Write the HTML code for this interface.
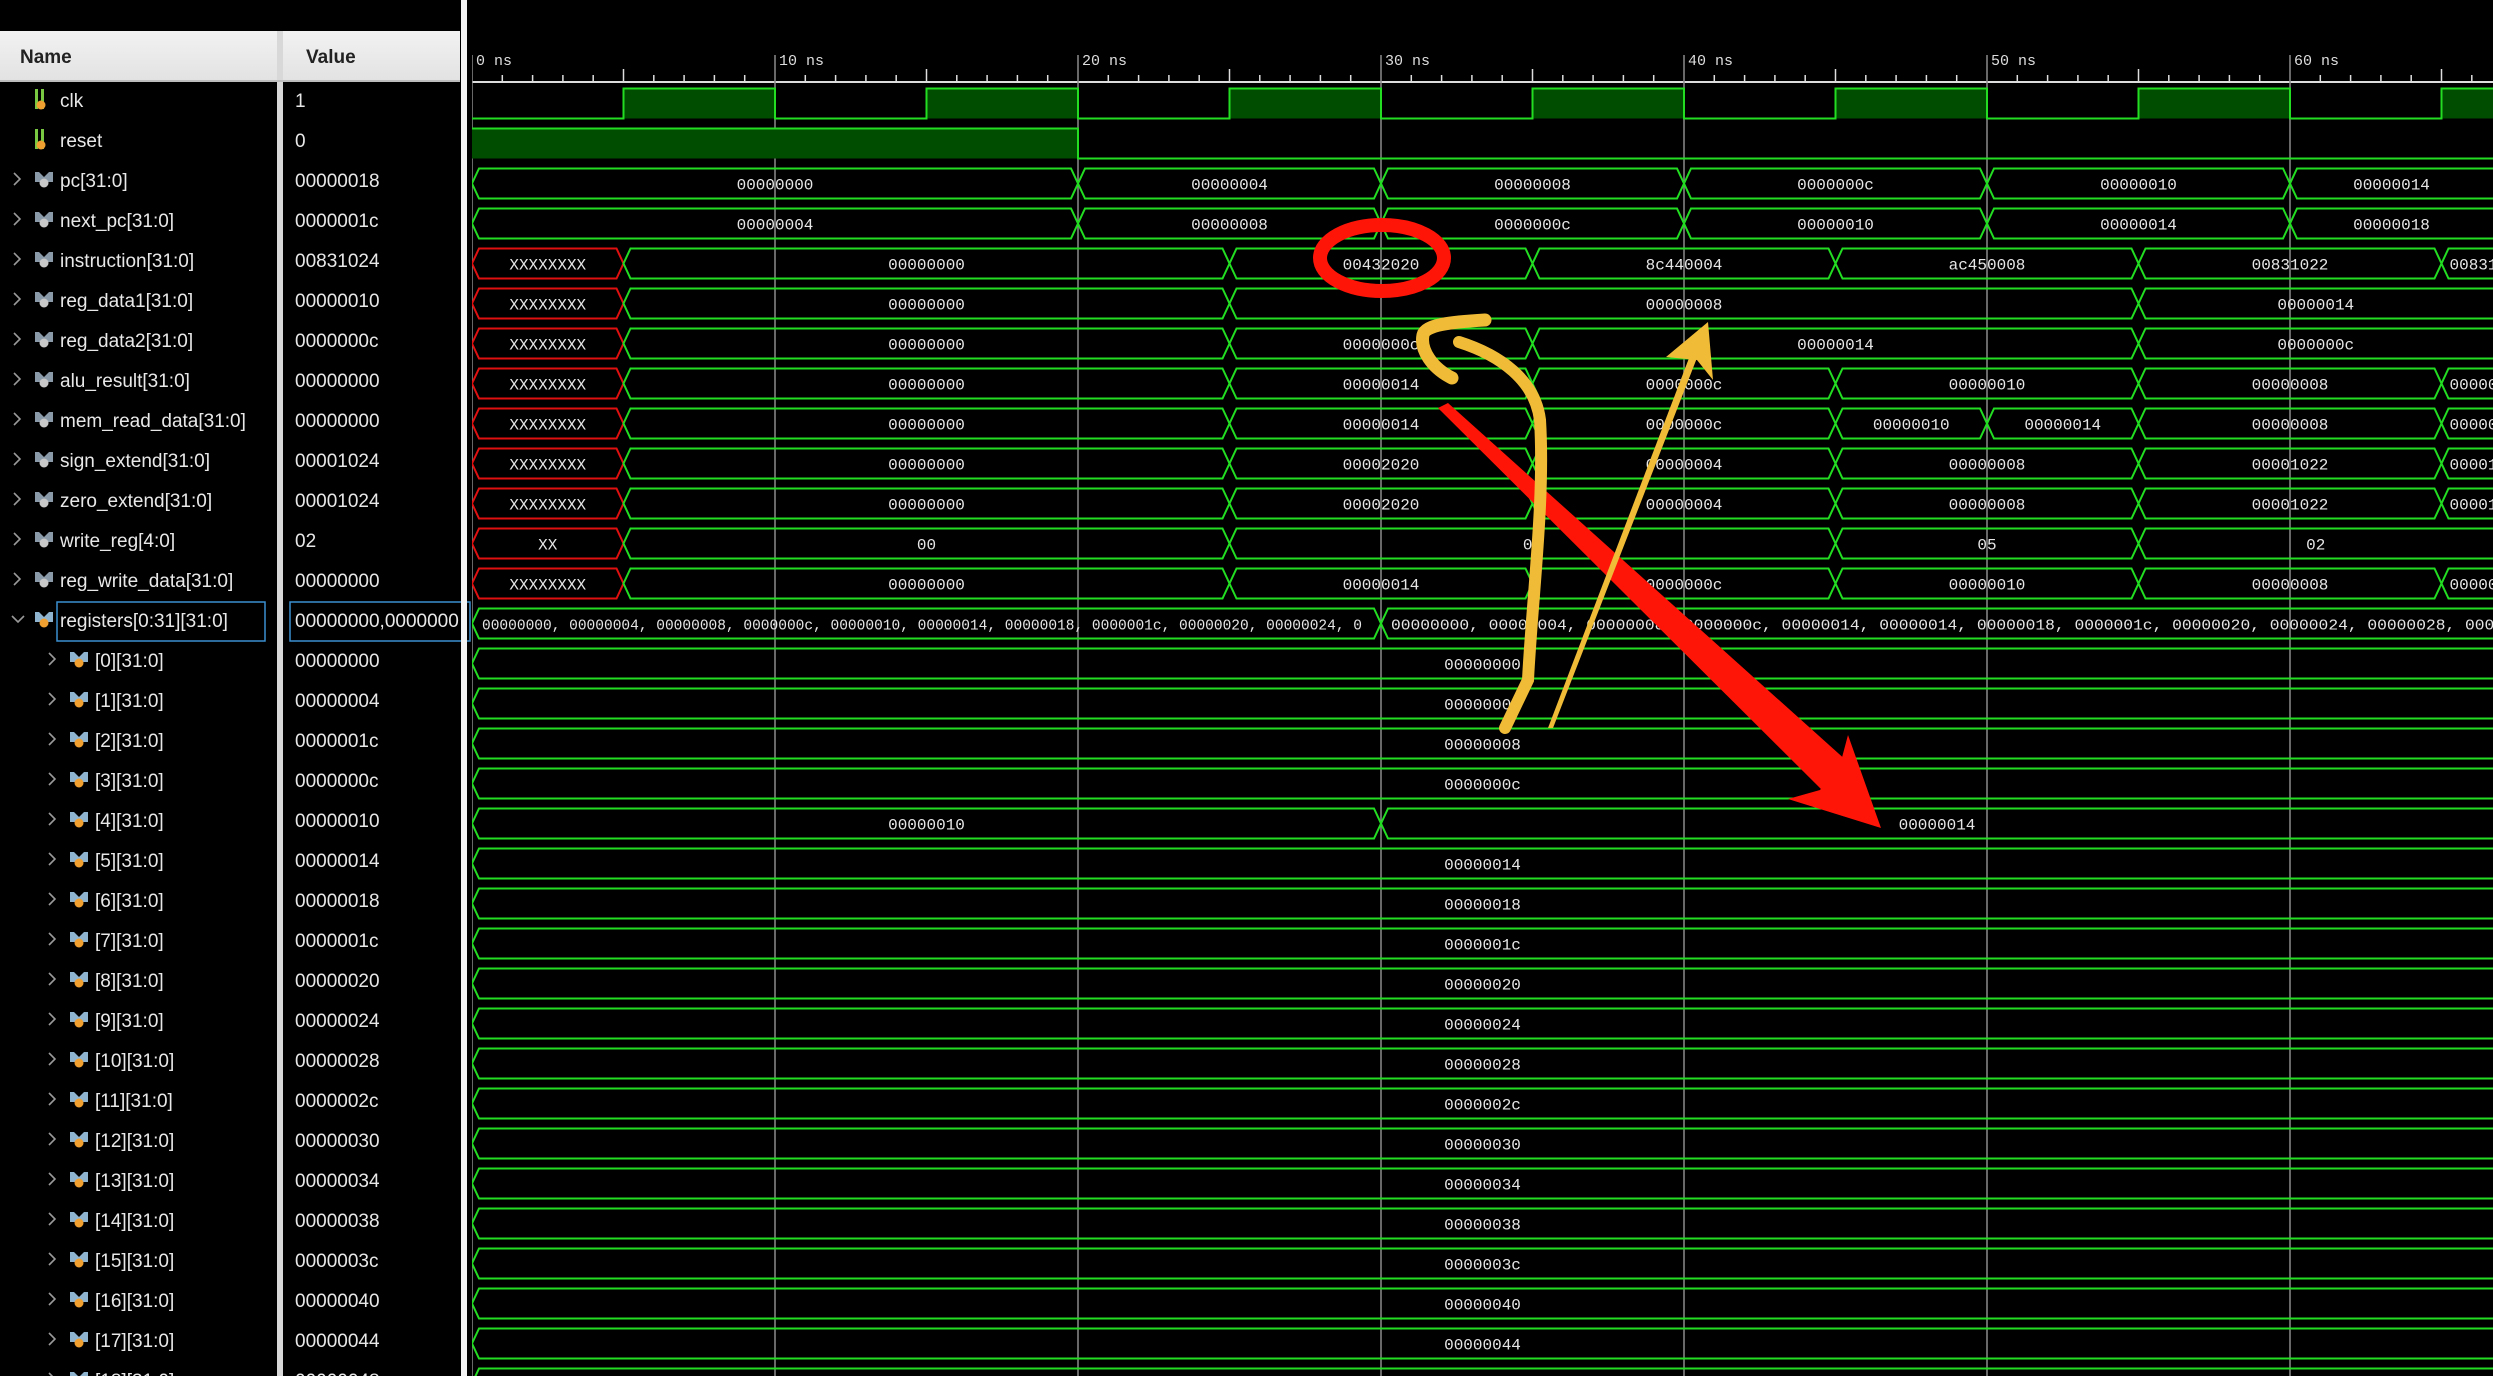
<!DOCTYPE html>
<html><head><meta charset="utf-8">
<style>
html,body{margin:0;padding:0;background:#000;overflow:hidden}
body{width:2493px;height:1376px;position:relative;font-family:"Liberation Sans",sans-serif}
svg{position:absolute;left:0;top:0}
</style></head><body>
<svg id="s" width="2493" height="1376" xmlns="http://www.w3.org/2000/svg"></svg>
<script>
const W=2493,H=1376,X0=472,K=30.3;
const tx=t=>X0+K*t;
let o='';
o+='<rect x="0" y="0" width="2493" height="1376" fill="#000"/>';
o+='<defs><linearGradient id="hg" x1="0" y1="0" x2="0" y2="1"><stop offset="0" stop-color="#f2f2f2"/><stop offset="1" stop-color="#e2e2e2"/></linearGradient><clipPath id="wc"><rect x="472" y="0" width="2021" height="1376"/></clipPath></defs>';
o+='<rect x="0" y="31" width="277" height="50" fill="url(#hg)"/>';
o+='<rect x="283" y="31" width="177" height="50" fill="url(#hg)"/>';
o+='<rect x="277" y="31" width="6" height="1345" fill="#d8d8d8"/>';
o+='<rect x="0" y="80" width="460" height="2" fill="#bdbdbd"/>';
o+='<text x="20" y="63" font-size="19" fill="#222" font-weight="bold">Name</text>';
o+='<text x="306" y="63" font-size="19" fill="#222" font-weight="bold">Value</text>';
const rows=[
['clk','1',0,'s'],['reset','0',0,'s'],['pc[31:0]','00000018',0,'b'],['next_pc[31:0]','0000001c',0,'b'],
['instruction[31:0]','00831024',0,'b'],['reg_data1[31:0]','00000010',0,'b'],['reg_data2[31:0]','0000000c',0,'b'],
['alu_result[31:0]','00000000',0,'b'],['mem_read_data[31:0]','00000000',0,'b'],['sign_extend[31:0]','00001024',0,'b'],
['zero_extend[31:0]','00001024',0,'b'],['write_reg[4:0]','02',0,'b'],['reg_write_data[31:0]','00000000',0,'b'],
['registers[0:31][31:0]','00000000,0000000',0,'a']];
const rv=['00000000','00000004','0000001c','0000000c','00000010','00000014','00000018','0000001c','00000020','00000024','00000028','0000002c','00000030','00000034','00000038','0000003c','00000040','00000044','00000048'];
rv.forEach((v,i)=>rows.push(['['+i+'][31:0]',v,1,'b']));
const cy=i=>100+40*i;
const wy=i=>103.5+40*i;
rows.forEach((r,i)=>{
 const y=cy(i);
 const ind=r[2]?35:0;
 if(r[3]!=='s'){
  if(r[3]==='a') o+=`<path d="M${12} ${y-4} l6 6 l6 -6" stroke="#999" stroke-width="1.6" fill="none"/>`;
  else o+=`<path d="M${14+ind} ${y-7} l6 6 l-6 6" stroke="#999" stroke-width="1.6" fill="none"/>`;
  const ix=35+ind;
  o+=`<path d="M${ix} ${y-8} l4 0 l5 5 l5 -5 l4 0 l0 10 l-18 0z" fill="${r[2]||r[3]==='a'?'#8fb4d0':'#8a9aa8'}"/>`;
  o+=`<circle cx="${ix+9}" cy="${y+3}" r="4.5" fill="${r[2]||r[3]==='a'?'#f0a030':'#c8c8c8'}"/>`;
 } else {
  o+=`<rect x="35" y="${y-11}" width="3" height="20" fill="#7ac943"/><rect x="41" y="${y-11}" width="3" height="20" fill="#7ac943"/><circle cx="41" cy="${y+5}" r="4.5" fill="#f0a030"/>`;
 }
 const nx=r[3]==='s'?60:(r[2]?95:60);
 o+=`<text x="${nx}" y="${y+7}" font-size="19" fill="#e8e8e8">${r[0]}</text>`;
 o+=`<text x="295" y="${y+7}" font-size="19" fill="#e8e8e8">${r[1]}</text>`;
 if(r[3]==='a'){
  o+=`<rect x="57" y="${y-18}" width="208" height="39" fill="none" stroke="#3a8fd0" stroke-width="1.5"/>`;
  o+=`<rect x="290" y="${y-18}" width="180" height="39" fill="none" stroke="#3a8fd0" stroke-width="1.5"/>`;
 }
});
o+='<rect x="461" y="0" width="6" height="1376" fill="#f4f4f4"/>';
let w='<g clip-path="url(#wc)">';
w+=`<line x1="472" y1="82" x2="2493" y2="82" stroke="#ddd" stroke-width="2"/>`;
for(let t=0;t<=67;t++){
 const x=tx(t);
 if(t%10===0){
  w+=`<line x1="${x}" y1="55" x2="${x}" y2="1376" stroke="#8a8a8a" stroke-width="1.5"/>`;
  w+=`<text x="${x+4}" y="65" font-family="Liberation Mono,monospace" font-size="15" fill="#ddd">${t} ns</text>`;
 } else if(t%5===0) w+=`<line x1="${x}" y1="69" x2="${x}" y2="82" stroke="#ddd" stroke-width="1.5"/>`;
 else w+=`<line x1="${x}" y1="75" x2="${x}" y2="82" stroke="#ddd" stroke-width="1.5"/>`;
}
const G='#22dd22',R='#e01010';
{const y=wy(0);let d='';
 for(let t=0;t<70;t+=10){
  w+=`<rect x="${tx(t+5)}" y="${y-15}" width="${K*5}" height="30" fill="#004d00"/>`;
 }
 d=`M${tx(0)} ${y+15}`;
 for(let t=0;t<70;t+=10){d+=` L${tx(t+5)} ${y+15} L${tx(t+5)} ${y-15} L${tx(t+10)} ${y-15} L${tx(t+10)} ${y+15}`;}
 w+=`<path d="${d}" stroke="${G}" stroke-width="2" fill="none"/>`;
}
{const y=wy(1);
 w+=`<rect x="${tx(0)}" y="${y-15}" width="${K*20}" height="30" fill="#004d00"/>`;
 w+=`<path d="M${tx(0)} ${y-15} L${tx(20)} ${y-15} L${tx(20)} ${y+15} L2493 ${y+15}" stroke="${G}" stroke-width="2" fill="none"/>`;
}
const lab=(x0,x1,y,txt)=>{
 const a=Math.max(x0,472),b=Math.min(x1,2493);
 const tw=txt.length*9.6;
 if(b-a<tw+16) return `<text x="${a+8}" y="${y+6}" font-family="Liberation Mono,monospace" font-size="16" fill="#e6e6e6">${txt}</text>`;
 return `<text x="${(a+b)/2}" y="${y+6}" text-anchor="middle" font-family="Liberation Mono,monospace" font-size="16" fill="#e6e6e6">${txt}</text>`;
};
function bus(i,segs){
 const y=wy(i),s=7;
 segs.forEach(g=>{
  const x0=tx(g[0]),x1=tx(g[1]);const c=g[3]?R:G;
  w+=`<polygon points="${x0},${y} ${x0+s},${y-15} ${x1-s},${y-15} ${x1},${y} ${x1-s},${y+15} ${x0+s},${y+15}" fill="none" stroke="${c}" stroke-width="2"/>`;
  if(g[2]!==null) w+=lab(x0,x1,y,g[2]);
 });
}
const E=80;
const XX=[0,5,'XXXXXXXX',1];
bus(2,[[0,20,'00000000'],[20,30,'00000004'],[30,40,'00000008'],[40,50,'0000000c'],[50,60,'00000010'],[60,E,'00000014']]);
bus(3,[[0,20,'00000004'],[20,30,'00000008'],[30,40,'0000000c'],[40,50,'00000010'],[50,60,'00000014'],[60,E,'00000018']]);
bus(4,[XX,[5,25,'00000000'],[25,35,'00432020'],[35,45,'8c440004'],[45,55,'ac450008'],[55,65,'00831022'],[65,E,'00831024']]);
bus(5,[XX,[5,25,'00000000'],[25,55,'00000008'],[55,E,'00000014']]);
bus(6,[XX,[5,25,'00000000'],[25,35,'0000000c'],[35,55,'00000014'],[55,E,'0000000c']]);
bus(7,[XX,[5,25,'00000000'],[25,35,'00000014'],[35,45,'0000000c'],[45,55,'00000010'],[55,65,'00000008'],[65,E,'00000000']]);
bus(8,[XX,[5,25,'00000000'],[25,35,'00000014'],[35,45,'0000000c'],[45,50,'00000010'],[50,55,'00000014'],[55,65,'00000008'],[65,E,'00000000']]);
bus(9,[XX,[5,25,'00000000'],[25,35,'00002020'],[35,45,'00000004'],[45,55,'00000008'],[55,65,'00001022'],[65,E,'00001024']]);
bus(10,[XX,[5,25,'00000000'],[25,35,'00002020'],[35,45,'00000004'],[45,55,'00000008'],[55,65,'00001022'],[65,E,'00001024']]);
bus(11,[[0,5,'XX',1],[5,25,'00'],[25,45,'04'],[45,55,'05'],[55,E,'02']]);
bus(12,[XX,[5,25,'00000000'],[25,35,'00000014'],[35,45,'0000000c'],[45,55,'00000010'],[55,65,'00000008'],[65,E,'00000000']]);
bus(13,[[0,30,null],[30,E,null]]);
{const y=wy(13);
 w+=`<text x="${tx(0)+10}" y="${y+6}" font-family="Liberation Mono,monospace" font-size="15" fill="#e6e6e6" textLength="880" lengthAdjust="spacingAndGlyphs">00000000, 00000004, 00000008, 0000000c, 00000010, 00000014, 00000018, 0000001c, 00000020, 00000024, 0</text>`;
 w+=`<text x="${tx(30)+10}" y="${y+6}" font-family="Liberation Mono,monospace" font-size="15" fill="#e6e6e6" textLength="1240" lengthAdjust="spacingAndGlyphs">00000000, 00000004, 00000008, 0000000c, 00000014, 00000014, 00000018, 0000001c, 00000020, 00000024, 00000028, 0000002c, 0000003</text>`;
}
const wl=['00000000','00000004','00000008','0000000c',null,'00000014','00000018','0000001c','00000020','00000024','00000028','0000002c','00000030','00000034','00000038','0000003c','00000040','00000044','00000048'];
wl.forEach((v,k)=>{
 if(k===4) bus(14+k,[[0,30,'00000010'],[30,E,'00000014']]);
 else bus(14+k,[[0,E,v]]);
});
w+='</g>';
o+=w;
o+=`<ellipse cx="1382" cy="258" rx="62" ry="33" fill="none" stroke="#ff1408" stroke-width="14"/>`;
o+=`<polygon points="1438,408 1448,403 1848,762 1824,792" fill="#ff1408"/>`;
o+=`<polygon points="1848,735 1881,828 1788,799 1820,790 1840,765" fill="#ff1408"/>`;
o+=`<path d="M1485 320 C1450 322 1425 325 1423 335 C1420 350 1432 368 1452 378" stroke="#f0bc38" stroke-width="13" fill="none" stroke-linecap="round"/>`;
o+=`<path d="M1459 342 C1500 355 1535 380 1540 420 C1545 500 1532 600 1528 680 L1505 728" stroke="#f0bc38" stroke-width="12" fill="none" stroke-linecap="round"/>`;
o+=`<polygon points="1548,728 1553,728 1702,345 1694,345" fill="#f0bc38"/>`;
o+=`<polygon points="1708,322 1713,380 1697,360 1666,357" fill="#f0bc38"/>`;
document.getElementById('s').innerHTML=o;
</script>
</body></html>
